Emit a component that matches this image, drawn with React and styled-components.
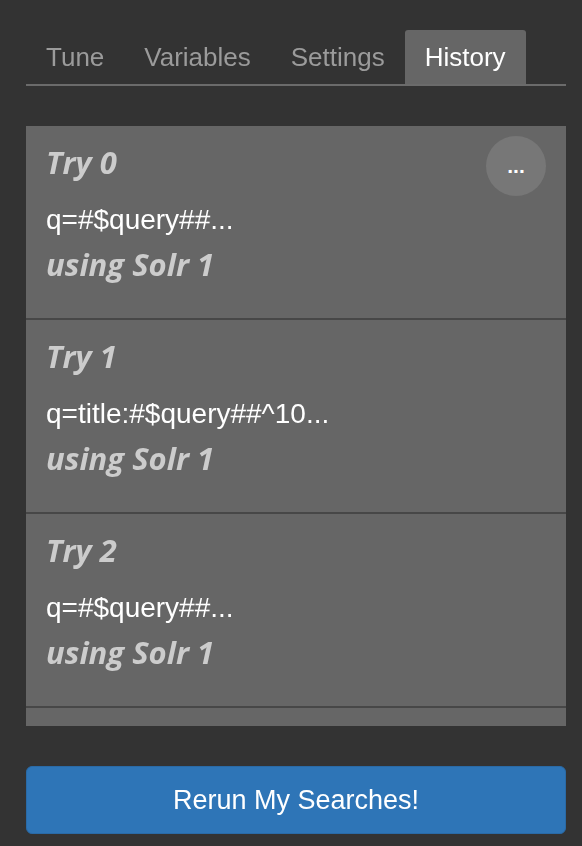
import styled, { createGlobalStyle } from "styled-components";

const GlobalStyle = createGlobalStyle`
  html, body {
    margin: 0;
    background: #333333;
  }
`;

const Panel = styled.div`
  width: 540px;
  padding: 30px 16px 0 26px;
  font-family: "Liberation Sans", Arial, sans-serif;
`;

const TabBar = styled.ul`
  display: flex;
  margin: 0;
  padding: 0;
  list-style: none;
  border-bottom: 2px solid #6b6b6b;
`;

const Tab = styled.li`
  height: 54px;
  line-height: 54px;
  padding: 0 20px;
  font-size: 26px;
  color: ${(p) => (p.$active ? "#ffffff" : "#9b9b9b")};
  background: ${(p) => (p.$active ? "#666666" : "transparent")};
  border-radius: 3px 3px 0 0;
  cursor: pointer;
`;

const HistoryList = styled.div`
  margin-top: 40px;
  height: 600px;
  overflow-y: auto;
  scrollbar-width: none;
  background: #666666;
`;

const Entry = styled.div`
  position: relative;
  height: 194px;
  padding: 16px 20px 0;
  box-sizing: border-box;
  border-bottom: 2px solid #474747;
`;

const TryTitle = styled.h3`
  margin: 0 0 21px;
  font-family: "Open Sans", Lato, sans-serif;
  font-style: italic;
  font-weight: 700;
  font-size: 31px;
  line-height: 40px;
  color: #cccccc;
`;

const Query = styled.div`
  margin: 0 0 7px;
  font-size: 28px;
  line-height: 34px;
  color: #ffffff;
`;

const Engine = styled.div`
  font-family: "Open Sans", Lato, sans-serif;
  font-style: italic;
  font-weight: 700;
  font-size: 31px;
  line-height: 40px;
  color: #cccccc;
`;

const MenuButton = styled.button`
  position: absolute;
  top: 10px;
  right: 20px;
  width: 60px;
  height: 60px;
  padding: 0;
  border: none;
  border-radius: 50%;
  background: #777777;
  color: #ffffff;
  font-family: "Liberation Sans", Arial, sans-serif;
  font-weight: 700;
  font-size: 21px;
  line-height: 60px;
  text-align: center;
`;

const RerunButton = styled.button`
  display: block;
  width: 100%;
  height: 68px;
  margin-top: 40px;
  border: 1px solid #2a6aa6;
  border-radius: 6px;
  background: #2e75b7;
  color: #ffffff;
  font-family: "Liberation Sans", Arial, sans-serif;
  font-size: 27px;
  cursor: pointer;
`;

const tabs = ["Tune", "Variables", "Settings", "History"];

const tries = [
  { id: 0, query: "q=#$query##...", engine: "Solr 1" },
  { id: 1, query: "q=title:#$query##^10...", engine: "Solr 1" },
  { id: 2, query: "q=#$query##...", engine: "Solr 1" },
  { id: 3, query: "q=#$query##...", engine: "Solr 1" },
];

const App = () => {
  return (
    <Panel>
      <GlobalStyle />
      <TabBar>
        {tabs.map((t) => (
          <Tab key={t} $active={t === "History"}>
            {t}
          </Tab>
        ))}
      </TabBar>
      <HistoryList>
        {tries.map((t, i) => (
          <Entry key={t.id}>
            <TryTitle>{`Try ${t.id}`}</TryTitle>
            <Query>{t.query}</Query>
            <Engine>{`using ${t.engine}`}</Engine>
            {i === 0 && <MenuButton>...</MenuButton>}
          </Entry>
        ))}
      </HistoryList>
      <RerunButton>Rerun My Searches!</RerunButton>
    </Panel>
  );
};

export default App;
